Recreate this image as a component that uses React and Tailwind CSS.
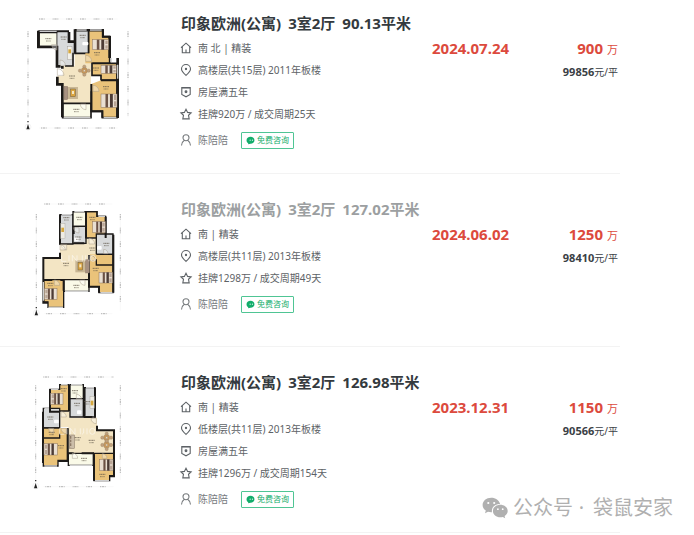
import React from 'react'

const WALL = '#1c1a18'
const WOOD = '#eac37a'
const FLOOR = '#f3e5c4'
const TILE = '#d8dadb'
const BALCONY = '#fafae8'

function Bed({ x, y, w = 44, h = 30, flip }) {
  const px = flip ? x : x + w - 12
  return (
    <g>
      <rect x={x} y={y} width={w} height={h} fill="#e9dfd2" stroke="#8a7460" strokeWidth="1.5" />
      <rect x={x + w * 0.28} y={y} width={w * 0.16} height={h} fill="#6b5245" />
      <rect x={x + w * 0.56} y={y} width={w * 0.18} height={h} fill="#4c3c36" />
      <rect x={px + 3} y={y + 3} width="7" height={h / 2 - 5} fill="#b9a596" />
      <rect x={px + 3} y={y + h / 2 + 2} width="7" height={h / 2 - 5} fill="#b9a596" />
    </g>
  )
}

function Sofa({ x, y, flip }) {
  return (
    <g>
      <rect x={x} y={y} width="42" height="36" fill="#c9b795" />
      <rect x={flip ? x + 31 : x} y={y - 2} width="11" height="40" fill="#a79181" stroke="#7b675a" strokeWidth="1" />
      <rect x={flip ? x + 8 : x + 20} y={y + 6} width="14" height="23" fill="#d9a441" stroke="#6f5b3b" strokeWidth="1.5" />
      <rect x={flip ? x + 12 : x + 24} y={y + 12} width="6" height="9" fill="#f5e7c4" />
    </g>
  )
}

function Dining({ x, y }) {
  return (
    <g stroke="#8f7a62" strokeWidth="1">
      <circle cx={x} cy={y - 12} r="5" fill="#c2a27c" />
      <circle cx={x} cy={y + 12} r="5" fill="#c2a27c" />
      <circle cx={x - 13} cy={y} r="5" fill="#c2a27c" />
      <circle cx={x + 13} cy={y} r="5" fill="#c2a27c" />
      <rect x={x - 8} y={y - 8} width="16" height="16" rx="3" fill="#c99a5d" />
      <circle cx={x} cy={y} r="3" fill="#eee2cc" />
    </g>
  )
}

// room name + area, only a smudge at this size
function Tag({ x, y }) {
  return (
    <g stroke="#5d5446" strokeWidth="3" opacity="0.75">
      <path d={`M${x - 9} ${y}h18`} strokeDasharray="4 1" />
      <path d={`M${x - 7} ${y + 7}h14`} strokeDasharray="3 1" strokeWidth="2.5" />
    </g>
  )
}

function Door({ x, y, r = 18, d = 1 }) {
  return (
    <path
      d={`M${x} ${y}h${r * d}a${r} ${r} 0 0 0 ${-r * d} ${-r * d}z`}
      fill="#fff" fillOpacity="0.35" stroke="#a89f8d" strokeWidth="1.5"
    />
  )
}

function Rulers({ left, right, top, bottom, x1, x2, y1, y2 }) {
  return (
    <g stroke="#a3a3a3" strokeWidth="3" strokeDasharray="3 2 7 2 3 24" fill="none">
      <path d={`M${x1} ${top}H${x2}M${x1 + 6} ${bottom}H${x2}`} />
      <path d={`M${left} ${y1}V${y2}M${right} ${y1}V${y2 - 6}`} />
      <path d={`M${x1} ${top}H${x2}M${x1} ${bottom}H${x2}M${left} ${y1}V${y2}M${right} ${y1}V${y2}`} stroke="#ececec" strokeWidth="1" strokeDasharray="none" />
    </g>
  )
}

function North({ x, y }) {
  return (
    <g>
      <circle cx={x} cy={y} r="9" fill="none" stroke="#ddd" />
      <path d={`M${x} ${y - 9}l5 16h-10z`} fill="#222" />
      <path d={`M${x - 2} ${y - 16}h4`} stroke="#333" strokeWidth="4" />
    </g>
  )
}

function PlanA() {
  return (
    <svg viewBox="9 27 360 360" className="size-full" role="img" aria-label="户型图">
      <Rulers left={39} right={339} top={45} bottom={372} x1={72} x2={308} y1={82} y2={340} />
      <path d="M143 186H179V148H228V298H143V240H127V216H143z" fill={FLOOR} />
      <g stroke={WALL} strokeWidth="5">
        <path d="M72 85H127V128H72z" fill={BALCONY} />
        <path d="M127 85H163V113H176V146L172 186H127z" fill={TILE} stroke="none" />
        <path d="M180 80H221V148H180z" fill={TILE} />
        <path d="M221 80H263V98H284V178H211V148H221z" fill={WOOD} stroke="none" />
        <path d="M221 148V80H263V98H284V178H232M150 186H174V146" fill="none" />
        <path d="M231 178H306V228H258V214H231z" fill={WOOD} />
        <path d="M229 240L258 229H306V341H262V322H229z" fill={WOOD} stroke="none" />
        <path d="M258 229H306V341H262V322H229V262" fill="none" />
        <path d="M143 298H228V341H143z" fill={BALCONY} />
      </g>
      <g fill="none" stroke={WALL} strokeWidth="8">
        <path d="M70 80V129H126V187H137M180 148V76M284 96V162M308 162V342M142 186V194M127 218V241H142V340M162 84V113H176" />
        <path d="M229 240V322H262V341M70 82H162M180 78H264V98H286" strokeWidth="6" />
      </g>
      <path d="M74 82H125M185 78H215M225 78H260M288 162V174M146 341H226M266 341H304M308 182V224" stroke="#c9c9c9" strokeWidth="4" />
      <rect x="158" y="128" width="13" height="38" fill="#f3f1ea" stroke="#8f8a80" />
      <rect x="160" y="136" width="8" height="12" fill="#d5a73e" />
      <rect x="202" y="114" width="18" height="10" rx="3" fill="#fff" />
      <Bed x={232} y={107} w={48} /><Bed x={258} y={184} w={46} h={24} /><Bed x={258} y={270} w={48} h={40} />
      <Dining x={208} y={200} />
      <Sofa x={147} y={249} />
      <Door x={126} y={122} r={16} d={-1} /><Door x={135} y={184} r={16} /><Door x={212} y={172} r={18} /><Door x={234} y={262} r={18} /><Door x={127} y={214} r={20} /><Door x={213} y={300} r={17} d={-1} />
      <Tag x={100} y={104} /><Tag x={146} y={99} /><Tag x={203} y={94} /><Tag x={246} y={146} /><Tag x={243} y={192} /><Tag x={273} y={248} /><Tag x={171} y={216} /><Tag x={184} y={316} />
      <North x={39} y={369} />
    </svg>
  )
}

function PlanB() {
  return (
    <svg viewBox="9 15 360 360" className="size-full" role="img" aria-label="户型图">
      <Rulers left={64} right={316} top={30} bottom={359} x1={88} x2={292} y1={60} y2={350} />
      <path d="M135 150H212V134H244V181H224V257H86V192H135z" fill={FLOOR} />
      <g stroke={WALL} strokeWidth="4">
        <path d="M135 62H174V150H135z" fill={TILE} />
        <path d="M174 53H213V97H174z" fill={BALCONY} />
        <path d="M174 97H213V148H174z" fill={TILE} />
        <path d="M213 53H246V67H272V132H213z" fill={WOOD} />
        <path d="M244 120H294V181H244z" fill={TILE} />
        <path d="M224 181H294V296H252V278H223z" fill={WOOD} stroke="none" />
        <path d="M244 181H294V296H252V278H223V186M244 196V213H294" fill="none" />
        <path d="M146 257H222V292H146z" fill={BALCONY} />
        <path d="M86 257H146V340H99V324H86z" fill={WOOD} />
      </g>
      <g fill="none" stroke={WALL} strokeWidth="6">
        <path d="M135 62V152M135 176V192H85V326H99M222 183V278H252V296M295 122V296M272 68V132M213 53V132M146 259V290M176 97V120M176 148H208M86 258H112M136 258H146" />
        <path d="M174 53H246V67H272" strokeWidth="4" />
      </g>
      <path d="M140 62H170M178 53H208M250 67H270M256 296H292M100 340H144M150 292H220M85 264V320" stroke="#cfcfcf" strokeWidth="4" />
      <rect x="137" y="88" width="13" height="46" fill="#eeece5" stroke="#99948b" />
      <rect x="139" y="101" width="8" height="13" fill="#d5a73e" />
      <rect x="178" y="130" width="13" height="12" rx="3" fill="#fff" />
      <rect x="246" y="156" width="14" height="11" rx="3" fill="#fff" />
      <Bed x={233} y={83} w={38} h={33} /><Bed x={252} y={235} w={40} h={32} /><Bed x={88} y={284} w={38} h={32} flip />
      <Sofa x={181} y={199} flip />
      <Door x={155} y={152} r={16} d={-1} /><Door x={192} y={101} r={16} d={-1} /><Door x={222} y={150} r={17} /><Door x={266} y={179} r={13} /><Door x={226} y={200} r={16} /><Door x={210} y={258} r={16} d={-1} /><Door x={118} y={274} r={16} /><Door x={135} y={168} r={16} />
      <path d="M140 184v18h14M162 184v18M172 202v-18l14 18v-18M202 184v18M212 184v14l-5 4M222 184v18M242 193a8 9 0 1 0-16 0a8 9 0 1 0 16 0" fill="none" stroke="#fff" strokeOpacity="0.5" strokeWidth="3" />
      <Tag x={154} y={71} /><Tag x={193} y={70} /><Tag x={190} y={129} /><Tag x={232} y={70} /><Tag x={274} y={148} /><Tag x={232} y={162} /><Tag x={153} y={208} /><Tag x={242} y={223} /><Tag x={184} y={274} /><Tag x={106} y={268} />
      <North x={64} y={357} />
    </svg>
  )
}

function PlanC() {
  return (
    <svg viewBox="9 15 360 360" className="size-full" role="img" aria-label="户型图">
      <Rulers left={62} right={316} top={30} bottom={359} x1={85} x2={296} y1={55} y2={340} />
      <path d="M136 133H164V152H246V190H296V259H160V180H136z" fill={FLOOR} />
      <g stroke={WALL} strokeWidth="4">
        <path d="M105 67H134V53H161V132H105z" fill={WOOD} />
        <path d="M165 53H205V95H165z" fill={BALCONY} />
        <path d="M165 95H205V150H165z" fill={TILE} />
        <path d="M209 62H240V150H209z" fill={TILE} />
        <path d="M85 124H134V183H85z" fill={TILE} />
        <path d="M85 183H158V280H129V297H85z" fill={WOOD} stroke="none" />
        <path d="M134 183H85V297H129V280H158V183M85 213H134V200" fill="none" />
        <path d="M160 259H235V295H160z" fill={BALCONY} />
        <path d="M237 259H296V326H284V341H237z" fill={WOOD} />
      </g>
      <g fill="none" stroke={WALL} strokeWidth="6">
        <path d="M105 66V134H134M84 134V288M129 282H158V184M240 62V152M246 176V190H297V328H284M237 262V341M162 54V132M208 62V146M160 259H176M200 259H237M206 150H232" />
      </g>
      <path d="M108 67H130M138 53H158M168 53H202M213 62H237M88 124H102M88 297H126M164 295H232M240 341H282" stroke="#cfcfcf" strokeWidth="4" />
      <rect x="225" y="88" width="13" height="36" fill="#eeece5" stroke="#99948b" />
      <rect x="227" y="101" width="8" height="14" fill="#d5a73e" />
      <rect x="186" y="130" width="13" height="12" rx="3" fill="#fff" />
      <rect x="117" y="158" width="14" height="11" rx="3" fill="#fff" />
      <Bed x={107} y={79} w={37} h={33} flip /><Bed x={87} y={230} w={40} h={34} flip /><Bed x={254} y={277} w={40} h={34} />
      <rect x="163" y="204" width="15" height="40" fill="#cbbda9" stroke="#7d6d5d" strokeWidth="1.5" />
      <path d="M167 207v34" stroke="#8d7a67" strokeWidth="4" strokeDasharray="8 3" />
      <Dining x={275} y={212} /><Dining x={275} y={234} />
      <Door x={138} y={150} r={16} /><Door x={184} y={98} r={16} /><Door x={116} y={184} r={15} d={-1} /><Door x={154} y={184} r={16} d={-1} /><Door x={244} y={154} r={16} d={-1} /><Door x={172} y={274} r={16} /><Door x={262} y={274} r={14} />
      <path d="M134 184v18h14M156 184v18M166 202v-18l14 18v-18M196 184v18M206 184v14l-5 4M216 184v18M240 193a8 9 0 1 0-16 0a8 9 0 1 0 16 0" fill="none" stroke="#fff" strokeOpacity="0.5" strokeWidth="3" />
      <Tag x={146} y={65} /><Tag x={180} y={71} /><Tag x={186} y={109} /><Tag x={216} y={104} /><Tag x={106} y={150} /><Tag x={110} y={196} /><Tag x={138} y={236} /><Tag x={188} y={212} /><Tag x={230} y={220} /><Tag x={207} y={274} /><Tag x={262} y={322} />
      <North x={62} y={357} />
    </svg>
  )
}

const icons = {
  house: <path d="M1 5.600 6 1.200l5 4.400M2.300 4.800V10.700h7.400V4.800M6 10.500V7.400" />,
  pin: <><path d="M6 11.400C3.200 8.900 1.500 7.200 1.500 5a4.500 4.500 0 0 1 9 0c0 2.200-1.700 3.900-4.500 6.400z" /><circle cx="6" cy="5" r="0.600" fill="currentColor" /></>,
  shield: <><path d="M1.800 1.500h8.400v7L6 10.800 1.800 8.500z" /><path d="M1.800 2h8.400" /><circle cx="6" cy="5.800" r="0.900" fill="currentColor" /></>,
  star: <path d="M6 1.200 7.600 4.400l3.500.5-2.600 2.400.7 3.600H2.800l.7-3.600L.9 4.900l3.500-.5z" />,
  user: <path d="M6 .8a3 3 0 1 1 0 6A3 3 0 0 1 6 .8zM1.500 11.600c.1-2.800 1.400-4.300 2.800-5.300M10.500 11.600c-.1-2.800-1.400-4.300-2.800-5.300" />,
}

function Icon({ name }) {
  return (
    <svg viewBox="1 0 11 12" className="h-[12px] w-[11px] shrink-0 overflow-visible" fill="none" stroke="currentColor" strokeWidth="1.100" aria-hidden="true">
      {icons[name]}
    </svg>
  )
}

const deals = [
  {
    plan: PlanA, area: '90.13平米', date: '2024.07.24', total: '900', unit: '99856',
    details: [['house', '南 北 | 精装'], ['pin', '高楼层(共15层) 2011年板楼'], ['shield', '房屋满五年'], ['star', '挂牌920万 / 成交周期25天']],
  },
  {
    plan: PlanB, area: '127.02平米', date: '2024.06.02', total: '1250', unit: '98410', visited: true,
    details: [['house', '南 | 精装'], ['pin', '高楼层(共11层) 2013年板楼'], ['star', '挂牌1298万 / 成交周期49天']],
  },
  {
    plan: PlanC, area: '126.98平米', date: '2023.12.31', total: '1150', unit: '90566',
    details: [['house', '南 | 精装'], ['pin', '低楼层(共11层) 2013年板楼'], ['shield', '房屋满五年'], ['star', '挂牌1296万 / 成交周期154天']],
  },
]

function Deal({ deal }) {
  const Plan = deal.plan
  return (
    <li className="flex min-h-[173px] border-b border-[#f3f3f3] pt-[25px] pb-[24px] pl-[18px] pr-[2px] first:min-h-0 first:pt-[13px]">
      <div className="mr-[43px] size-[120px] shrink-0">
        <Plan />
      </div>
      <div className="min-w-0 flex-1">
        <h2 className="text-[15px] font-bold leading-[20px]">
          <a href="#" className={`flex gap-[7px] whitespace-nowrap ${deal.visited ? 'text-[#9c9fa1]' : 'text-[#343a3e]'}`}>
            <span>印象欧洲(公寓)</span>
            <span>3室2厅</span>
            <span>{deal.area}</span>
          </a>
        </h2>
        <div className="mt-[4px] text-[10px] leading-[22px] text-[#5d6266]">
          {deal.details.map(([icon, text]) => (
            <div key={icon} className="flex items-center gap-[6px] whitespace-nowrap">
              <Icon name={icon} />
              <span>{text}</span>
            </div>
          ))}
        </div>
        <div className="mt-[6px] flex h-[18px] items-center text-[10px] text-[#777b7e]">
          <Icon name="user" />
          <span className="ml-[6px] mr-[13px]">陈陪陪</span>
          <button className="flex h-[17px] items-center gap-[2px] rounded-[1px] border border-[#4fc594] px-[4px] text-[8px] text-[#12ad6b]">
            <svg viewBox="0 0 10 10" className="size-[9px]" aria-hidden="true">
              <path d="M5 .8c2.500 0 4.400 1.600 4.400 3.800S7.500 8.500 5 8.500L2.400 9.300V7.900C1.200 7.200.6 6 .6 4.600.6 2.400 2.500.8 5 .8z" fill="currentColor" />
              <circle cx="4.600" cy="4.600" r="0.600" fill="#fff" />
              <circle cx="7.100" cy="4.600" r="0.600" fill="#fff" />
            </svg>
            免费咨询
          </button>
        </div>
      </div>
      <div className="w-[78px] shrink-0 pt-[24px] text-[15px] font-bold leading-[22px] text-[#dc4a3d]">
        {deal.date}
      </div>
      <div className="w-[108px] shrink-0 pt-[24px] text-right leading-[22px]">
        <div className="text-[11px] text-[#dc4a3d]">
          <span className="mr-[4px] text-[15px] font-bold">{deal.total}</span>万
        </div>
        <div className="text-[10px] text-[#3a4045]">
          <span className="text-[11px] font-bold">{deal.unit}</span>元/平
        </div>
      </div>
    </li>
  )
}

export default function App() {
  return (
    <div className="relative bg-white font-['Noto_Sans','Noto_Sans_CJK_SC',sans-serif]" lang="zh-CN">
      <ul className="mr-[74px]">
        {deals.map((deal) => (
          <Deal key={deal.date} deal={deal} />
        ))}
      </ul>

      {/* watermark */}
      <div className="absolute bottom-[10px] right-[21px] flex items-center text-[20px] leading-[30px] text-[#b0b0b0]">
        <svg viewBox="0 0 26 22" className="mr-[5px] h-[22px] w-[26px]" fill="currentColor" aria-hidden="true">
          <path d="M9.200.8C4.300.8.600 4 .600 8c0 2.300 1.200 4.200 3.200 5.600L3 16.200l3-1.500c1 .3 2 .5 3.200.5h.8C9.100 10.600 13 7 17.800 7h.3C17.300 3.400 13.600.8 9.200.8z" />
          <path d="M25.700 14c0-3.500-3.400-6.200-7.400-6.200s-7.400 2.700-7.400 6.200 3.300 6.300 7.400 6.300c.9 0 1.700-.1 2.500-.4l2.400 1.300-.6-2.200c1.900-1.200 3.100-2.900 3.100-5z" />
          <g fill="#fff">
            <circle cx="6.300" cy="6" r="1.100" />
            <circle cx="12.200" cy="6" r="1.100" />
            <circle cx="15.900" cy="12.200" r="0.900" />
            <circle cx="20.700" cy="12.200" r="0.900" />
          </g>
        </svg>
        <span>公众号</span>
        <span className="w-[20px] pr-[3px] text-center">·</span>
        <span>袋鼠安家</span>
      </div>
    </div>
  )
}
